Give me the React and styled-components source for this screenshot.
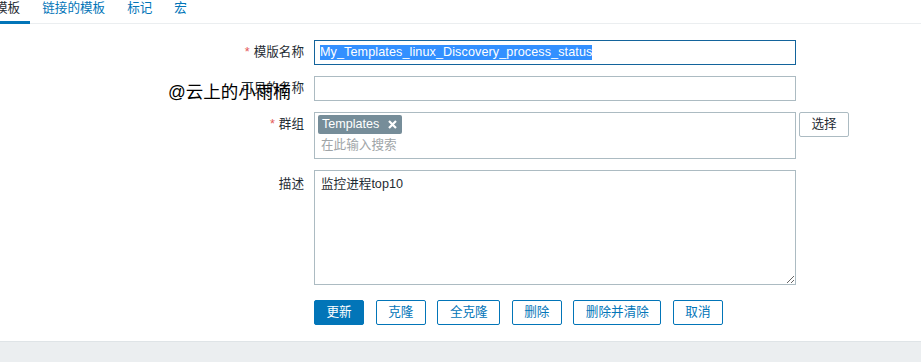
import React from "react";
import styled, { createGlobalStyle } from "styled-components";

const Global = createGlobalStyle`
  html, body { margin: 0; padding: 0; background: #fff; }
  body {
    font-family: "Liberation Sans", "Noto Sans CJK SC", sans-serif;
    font-size: 12.6px;
    color: #1f2c33;
  }
  * { box-sizing: border-box; }
`;

const Page = styled.div`
  position: relative;
  min-height: 100vh;
  display: flex;
  flex-direction: column;
  overflow: hidden;
`;

const TabBar = styled.div`
  display: flex;
  border-bottom: 1px solid #ebeef0;
  margin-left: -15px;
  height: 24px;
`;

const Tab = styled.div`
  padding: 1px 10px 0;
  margin-right: 2px;
  height: 24px;
  line-height: 14px;
  border-bottom: 3px solid ${(p) => (p.$active ? "#0275b8" : "transparent")};
  color: ${(p) => (p.$active ? "#1f2c33" : "#0275b8")};
  white-space: nowrap;
`;

const Form = styled.div`
  display: flex;
  flex-direction: column;
  gap: 11px;
  padding-top: 16px;
`;

const Row = styled.div`
  display: flex;
  align-items: flex-start;
`;

const Label = styled.div`
  width: 314px;
  flex-shrink: 0;
  padding-right: 10px;
  text-align: right;
  line-height: 25px;
  padding-top: ${(p) => p.$pt || 0}px;
  white-space: nowrap;
  color: #1f2c33;
`;

const Star = styled.span`
  color: #e45959;
  margin-right: 4px;
`;

const Field = styled.div`
  display: flex;
  align-items: flex-start;
  gap: 3px;
`;

const FakeInput = styled.div`
  width: 482px;
  height: 25px;
  border: 1px solid #13649c;
  padding: 0 5px;
  display: flex;
  align-items: center;
`;

const Selected = styled.span`
  background: #3390ff;
  color: #fff;
  line-height: 15px;
  letter-spacing: 0.1px;
  white-space: nowrap;
`;

const TextInput = styled.input`
  width: 482px;
  height: 25px;
  border: 1px solid #acbbc2;
  padding: 0 5px;
  font: inherit;
  color: #1f2c33;
  outline: none;
`;

const MultiSelect = styled.div`
  width: 482px;
  height: 47px;
  border: 1px solid #acbbc2;
  padding: 2px 3px;
  display: flex;
  flex-direction: column;
  align-items: flex-start;
`;

const Tag = styled.span`
  display: inline-flex;
  align-items: center;
  height: 19px;
  background: #768d99;
  color: #fff;
  border-radius: 2px;
  padding: 0 5px 0 4px;
  gap: 9px;
  line-height: 19px;
`;

const SearchInput = styled.input`
  border: none;
  outline: none;
  font: inherit;
  height: 22px;
  padding: 0 0 0 3px;
  width: 100%;
  color: #1f2c33;
  &::placeholder { color: #a0a5a8; }
`;

const TextArea = styled.textarea`
  width: 482px;
  height: 115px;
  border: 1px solid #acbbc2;
  padding: 5px 6px;
  font: inherit;
  line-height: 16px;
  color: #1f2c33;
  outline: none;
  resize: both;
`;

const Buttons = styled.div`
  display: flex;
  gap: 11.5px;
  margin-left: 314px;
  margin-top: 4px;
`;

const Button = styled.button`
  height: 25px;
  padding: 0 11.5px;
  border-radius: 2px;
  font: inherit;
  line-height: 23px;
  cursor: pointer;
  border: 1px solid ${(p) => (p.$primary ? "#0275b8" : p.$plain ? "#acbbc2" : "#0275b8")};
  background: ${(p) => (p.$primary ? "#0275b8" : "#fff")};
  color: ${(p) => (p.$primary ? "#fff" : p.$plain ? "#1f2c33" : "#0275b8")};
`;

const Footer = styled.div`
  flex: 1;
  margin-top: 16px;
  background: #ebeef0;
  border-top: 1px solid #dfe4e7;
`;

const Watermark = styled.div`
  position: absolute;
  left: 168px;
  top: 80px;
  font-family: "Liberation Sans", "Noto Sans CJK SC", sans-serif;
  font-size: 17.5px;
  line-height: 24px;
  color: #000;
  pointer-events: none;
  white-space: nowrap;
`;

const Cross = () => (
  <svg width="9" height="9" viewBox="0 0 9 9">
    <path d="M1 1 L8 8 M8 1 L1 8" stroke="#fff" strokeWidth="2.2" strokeLinecap="butt" />
  </svg>
);

export default function App() {
  return (
    <Page>
      <Global />
      <TabBar>
        <Tab $active>模板</Tab>
        <Tab>链接的模板</Tab>
        <Tab>标记</Tab>
        <Tab>宏</Tab>
      </TabBar>
      <Form>
        <Row>
          <Label><Star>*</Star>模版名称</Label>
          <Field>
            <FakeInput>
              <Selected>My_Templates_linux_Discovery_process_status</Selected>
            </FakeInput>
          </Field>
        </Row>
        <Row>
          <Label>可见的名称</Label>
          <Field>
            <TextInput defaultValue="" />
          </Field>
        </Row>
        <Row>
          <Label><Star>*</Star>群组</Label>
          <Field>
            <MultiSelect>
              <Tag>Templates<Cross /></Tag>
              <SearchInput placeholder="在此输入搜索" />
            </MultiSelect>
            <Button $plain>选择</Button>
          </Field>
        </Row>
        <Row>
          <Label $pt={2}>描述</Label>
          <Field>
            <TextArea defaultValue="监控进程top10" />
          </Field>
        </Row>
        <Buttons>
          <Button $primary>更新</Button>
          <Button>克隆</Button>
          <Button>全克隆</Button>
          <Button>删除</Button>
          <Button>删除并清除</Button>
          <Button>取消</Button>
        </Buttons>
      </Form>
      <Footer />
      <Watermark>@云上的小雨楠</Watermark>
    </Page>
  );
}
